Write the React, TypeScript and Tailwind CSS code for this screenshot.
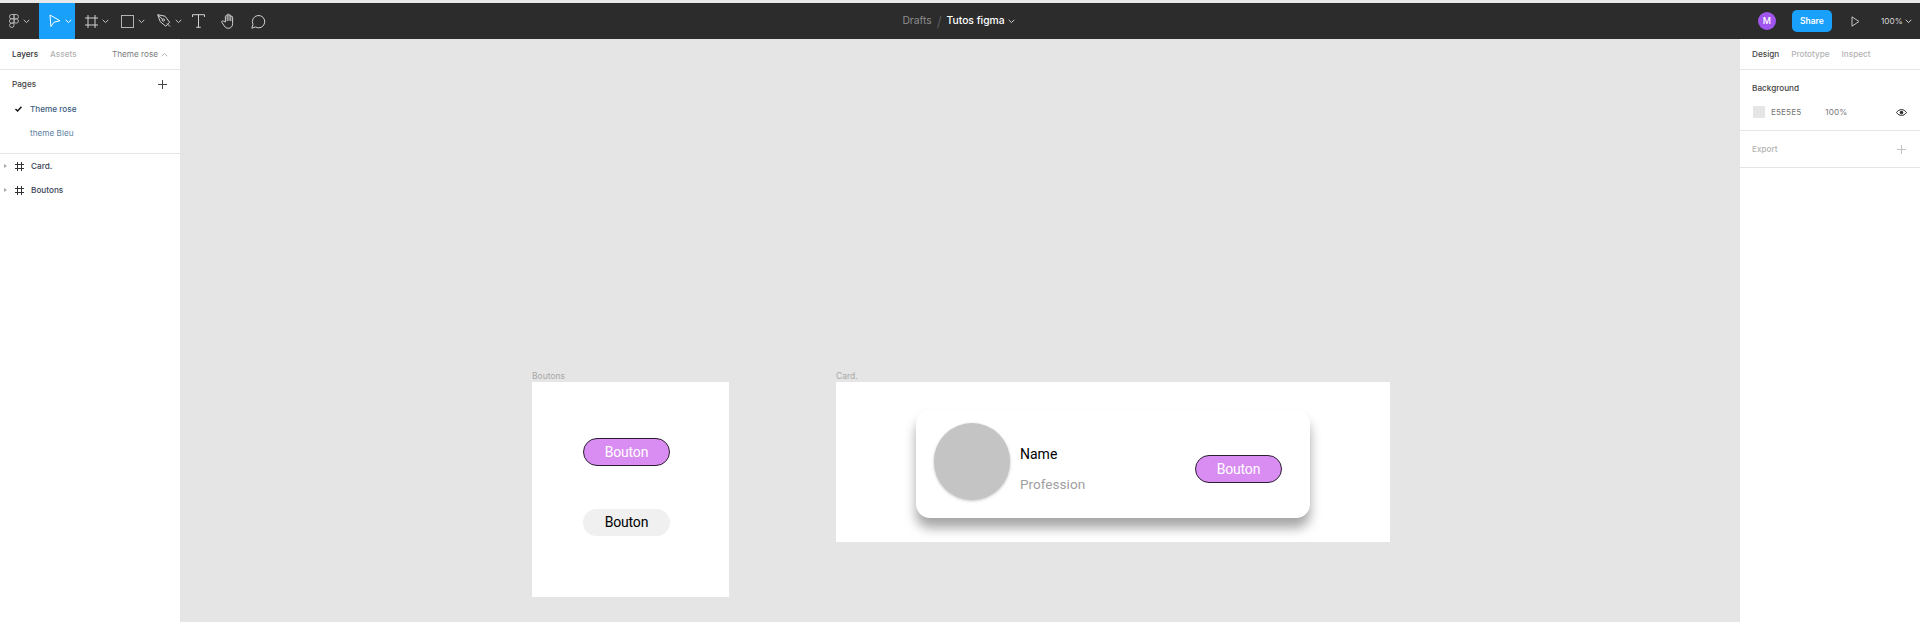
const Chevron = ({ className = "text-white" }: { className?: string }) => (
  <svg width="7" height="5" viewBox="0 0 7 5" fill="none" className={className}>
    <path d="M0.7 0.8 3.5 3.6 6.3 0.8" stroke="currentColor" strokeWidth="1" />
  </svg>
)

function ToolButton({ children, active = false }: { children: React.ReactNode; active?: boolean }) {
  return (
    <div className={`w-9 h-full flex items-center pl-[10px] gap-1 ${active ? "bg-[#18a0fb]" : ""}`}>
      {children}
      <Chevron className={active ? "text-white" : "text-[#c4c4c4]"} />
    </div>
  )
}

function PlainTool({ children }: { children: React.ReactNode }) {
  return <div className="w-[30px] h-full flex items-center justify-center">{children}</div>
}

function Toolbar() {
  return (
    <header className="h-9 bg-[#2c2c2c] grid grid-cols-[1fr_auto_1fr] items-center shrink-0">
      <div className="flex items-center h-full">
        <div className="w-[39px] h-full flex items-center pl-[9px] gap-1">
          <svg width="10" height="14" viewBox="0 0 10 14" fill="none" stroke="#b3b3b3" strokeWidth="1">
            <path d="M5 .5H2.6a2.1 2.1 0 0 0 0 4.3H5zM5 .5h2.3a2.1 2.1 0 0 1 0 4.3H5zM5 4.8H2.6a2.1 2.1 0 0 0 0 4.3H5zM5 7a2.1 2.1 0 1 0 4.4 0A2.1 2.1 0 0 0 5 7zM5 9.1H2.6A2.2 2.2 0 1 0 5 11.3z" />
          </svg>
          <Chevron className="text-[#c4c4c4]" />
        </div>
        <ToolButton active>
          <svg width="12" height="14" viewBox="0 0 12 14" fill="none" stroke="#fff" strokeWidth="1">
            <path d="M1 1 1.900 12.600 5 8.200 11 6.800z" />
          </svg>
        </ToolButton>
        <ToolButton>
          <svg width="13" height="13" viewBox="0 0 13 13" fill="none" stroke="#d0d0d0" strokeWidth="1">
            <path d="M3 0v13M10 0v13M0 3h13M0 10h13" />
          </svg>
        </ToolButton>
        <ToolButton>
          <svg width="13" height="13" viewBox="0 0 13 13" fill="none" stroke="#b3b3b3" strokeWidth="1">
            <rect x="0.5" y="0.5" width="12" height="12" />
          </svg>
        </ToolButton>
        <ToolButton>
          <svg width="14" height="14" viewBox="0 0 14 14" fill="none" stroke="#d0d0d0" strokeWidth="1">
            <path d="M.7.7 8 2.200l4.600 6-3.800 4-5.600-4.500z" />
            <circle cx="6.300" cy="6" r="1.200" />
            <path d="M1 1 5.500 5.200M10 9.500l3 3" />
          </svg>
        </ToolButton>
        <PlainTool>
          <svg width="13" height="14" viewBox="0 0 13 14" fill="none" stroke="#d0d0d0" strokeWidth="1">
            <path d="M.5 3V.7h12V3M6.500.7v12.600M4.200 13.300h4.600" />
          </svg>
        </PlainTool>
        <PlainTool>
          <svg width="15" height="16" viewBox="0 0 15 16" fill="none" stroke="#d0d0d0" strokeWidth="1" strokeLinejoin="round">
            <path d="M4.400 9V3.500a.9.9 0 0 1 1.800 0V2a.9.9 0 0 1 1.800 0v.8a.9.9 0 0 1 1.800 0v1.400a.9.9 0 0 1 1.800 0v6.500c0 2.700-1.500 4.600-4.200 4.600-2 0-3-.8-4-2.200L.8 9.200c-.6-1 .8-1.900 1.600-1z" />
            <path d="M6.200 3.500V8M8 2.800V8M9.800 4.200V8" />
          </svg>
        </PlainTool>
        <PlainTool>
          <svg width="15" height="15" viewBox="0 0 15 15" fill="none" stroke="#d0d0d0" strokeWidth="1">
            <path d="M.8 14.200 2 10.400a6.200 6.200 0 1 1 2.400 2.600z" />
          </svg>
        </PlainTool>
      </div>
      <div className="flex items-center text-[10.3px] mr-[3px]">
        <span className="text-[#8c8c8c]">Drafts</span>
        <span className="text-[#666666] text-[14px] font-light ml-[5px] mr-[5px]">/</span>
        <span className="text-white font-medium">Tutos figma</span>
        <Chevron className="text-[#d0d0d0] ml-[3px] mt-[1px]" />
      </div>
      <div className="flex items-center justify-end h-full">
        <div className="w-[18px] h-[18px] rounded-full bg-[#9f55ee] text-white text-[9px] font-medium flex items-center justify-center">M</div>
        <div className="w-10 h-[22px] ml-4 rounded-[5px] bg-[#18a0fb] text-white text-[8.5px] font-semibold flex items-center justify-center">Share</div>
        <svg width="9" height="11" viewBox="0 0 9 11" fill="none" stroke="#c4c4c4" strokeWidth="1" className="ml-[19px]">
          <path d="M1 .8v9.400L8 5.500z" />
        </svg>
        <span className="text-[#d8d8d8] text-[8.200px] ml-[21px] tracking-[0.1px]">100%</span>
        <Chevron className="text-[#d0d0d0] ml-[2px] mr-2" />
      </div>
    </header>
  )
}

const FrameIcon = () => (
  <svg width="9" height="9" viewBox="0 0 9 9" fill="none" stroke="#333" strokeWidth="1" className="ml-[8px] mr-[7px]">
    <path d="M2.500 0v9M6.500 0v9M0 2.500h9M0 6.500h9" />
  </svg>
)

function LayerRow({ label }: { label: string }) {
  return (
    <div className="h-6 flex items-center pl-1">
      <span className="w-0 h-0 border-y-[2.500px] border-y-transparent border-l-[3px] border-l-[#a8a8a8]" />
      <FrameIcon />
      <span className="font-medium text-[#3a4356]">{label}</span>
    </div>
  )
}

function LeftPanel() {
  return (
    <aside className="w-[180px] bg-white shrink-0 text-[8.200px]">
      <div className="h-[31px] border-b border-[#e5e5e5] flex items-center pl-3 pr-[12px]">
        <span className="font-medium text-[#333333]">Layers</span>
        <span className="font-medium text-[#b3b3b3] ml-3">Assets</span>
        <span className="ml-auto text-[#7a7a7a]">Theme rose</span>
        <Chevron className="text-[#b3b3b3] rotate-180 ml-[3px]" />
      </div>
      <div className="h-[84px] border-b border-[#e5e5e5]">
        <div className="h-[27px] pt-[2px] flex items-center justify-between pl-3 pr-[13px]">
          <span className="font-medium text-[#444444]">Pages</span>
          <svg width="9" height="9" viewBox="0 0 9 9" stroke="#444" strokeWidth="1">
            <path d="M4.500 0v9M0 4.500h9" />
          </svg>
        </div>
        <div className="h-6 flex items-center pl-[15px]">
          <svg width="7" height="6" viewBox="0 0 7 6" fill="none" stroke="#111" strokeWidth="1.400" className="mr-[8px]">
            <path d="M.5 3 2.600 5 6.500.7" />
          </svg>
          <span className="font-medium text-[#3b5c80]">Theme rose</span>
        </div>
        <div className="h-6 flex items-center pl-[30px] text-[#5d7f9f]">theme Bleu</div>
      </div>
      <div>
        <LayerRow label="Card." />
        <LayerRow label="Boutons" />
      </div>
    </aside>
  )
}

function RightPanel() {
  return (
    <aside className="w-[180px] bg-white shrink-0 text-[8.200px]">
      <div className="h-[31px] border-b border-[#e5e5e5] flex items-center pl-3 gap-3">
        <span className="font-medium text-[#444444]">Design</span>
        <span className="font-medium text-[#b3b3b3]">Prototype</span>
        <span className="font-medium text-[#b3b3b3]">Inspect</span>
      </div>
      <div className="h-[61px] border-b border-[#e5e5e5] pl-[13px] pr-[13px]">
        <div className="pt-3 -ml-px font-medium text-[#444444] leading-3">Background</div>
        <div className="flex items-center mt-3 h-3">
          <span className="w-3 h-3 bg-[#e5e5e5]" />
          <span className="ml-[6px] text-[#777777] tracking-[0.1px]">E5E5E5</span>
          <span className="ml-6 text-[#777777] tracking-[0.1px]">100%</span>
          <svg width="11" height="7" viewBox="0 0 11 7" fill="none" stroke="#222" strokeWidth="1" className="ml-auto">
            <path d="M.5 3.500C2 1.500 3.600.6 5.500.6s3.500.9 5 2.900C9 5.500 7.400 6.400 5.500 6.400S2 5.500.5 3.500z" />
            <circle cx="5.500" cy="3.500" r="1.300" fill="#222" />
          </svg>
        </div>
      </div>
      <div className="h-[37px] border-b border-[#e5e5e5] flex items-center justify-between pl-3 pr-[14px]">
        <span className="font-medium text-[#b3b3b3]">Export</span>
        <svg width="9" height="9" viewBox="0 0 9 9" stroke="#c4c4c4" strokeWidth="1">
          <path d="M4.500 0v9M0 4.500h9" />
        </svg>
      </div>
    </aside>
  )
}

function PinkButton() {
  return (
    <div className="w-[87px] h-[28px] rounded-full bg-[#d98cf2] border border-[#2b2030] text-white text-[14px] tracking-[-0.2px] flex items-center justify-center font-['Roboto',sans-serif]">
      Bouton
    </div>
  )
}

function Canvas() {
  return (
    <main className="relative flex-1 bg-[#e5e5e5]">
      <div className="absolute left-[352px] top-[331px]">
        <div className="text-[8.500px] leading-3 text-[#a8a8a8] h-3">Boutons</div>
        <div className="w-[197px] h-[215px] bg-white pl-[51px] pt-[56px] flex flex-col gap-[43px]">
          <PinkButton />
          <div className="w-[87px] h-[27px] rounded-full bg-[#f0f0f0] text-black text-[14px] tracking-[-0.2px] flex items-center justify-center font-['Roboto',sans-serif]">
            Bouton
          </div>
        </div>
      </div>

      <div className="absolute left-[656px] top-[331px]">
        <div className="text-[8.500px] leading-3 text-[#a8a8a8] h-3">Card.</div>
        <div className="w-[554px] h-[160px] bg-white overflow-hidden pl-[80px] pt-[28px]">
          <div className="w-[394px] h-[108px] bg-white rounded-[14px] shadow-[0_10px_12px_rgba(0,0,0,0.35)] flex items-start pl-[18px] pt-[13px] pr-7 font-['Roboto',sans-serif]">
            <div className="w-[76px] h-[77px] rounded-full bg-[#c4c4c4] shadow-[0_1px_3px_rgba(0,0,0,0.25)] shrink-0" />
            <div className="ml-[10px] pt-[21px]">
              <div className="text-[14px] leading-[20px] text-black">Name</div>
              <div className="text-[13.600px] leading-[20px] mt-[10px] text-[#a0a0a0]">Profession</div>
            </div>
            <div className="ml-auto mt-[32px]">
              <PinkButton />
            </div>
          </div>
        </div>
      </div>
    </main>
  )
}

export default function App() {
  return (
    <div className="h-screen flex flex-col bg-[#e8e8e8] overflow-hidden font-['Inter',sans-serif]">
      <div className="h-[3px] bg-[#e8e8e8] shrink-0" />
      <Toolbar />
      <div className="flex flex-1 min-h-0">
        <LeftPanel />
        <Canvas />
        <RightPanel />
      </div>
    </div>
  )
}
